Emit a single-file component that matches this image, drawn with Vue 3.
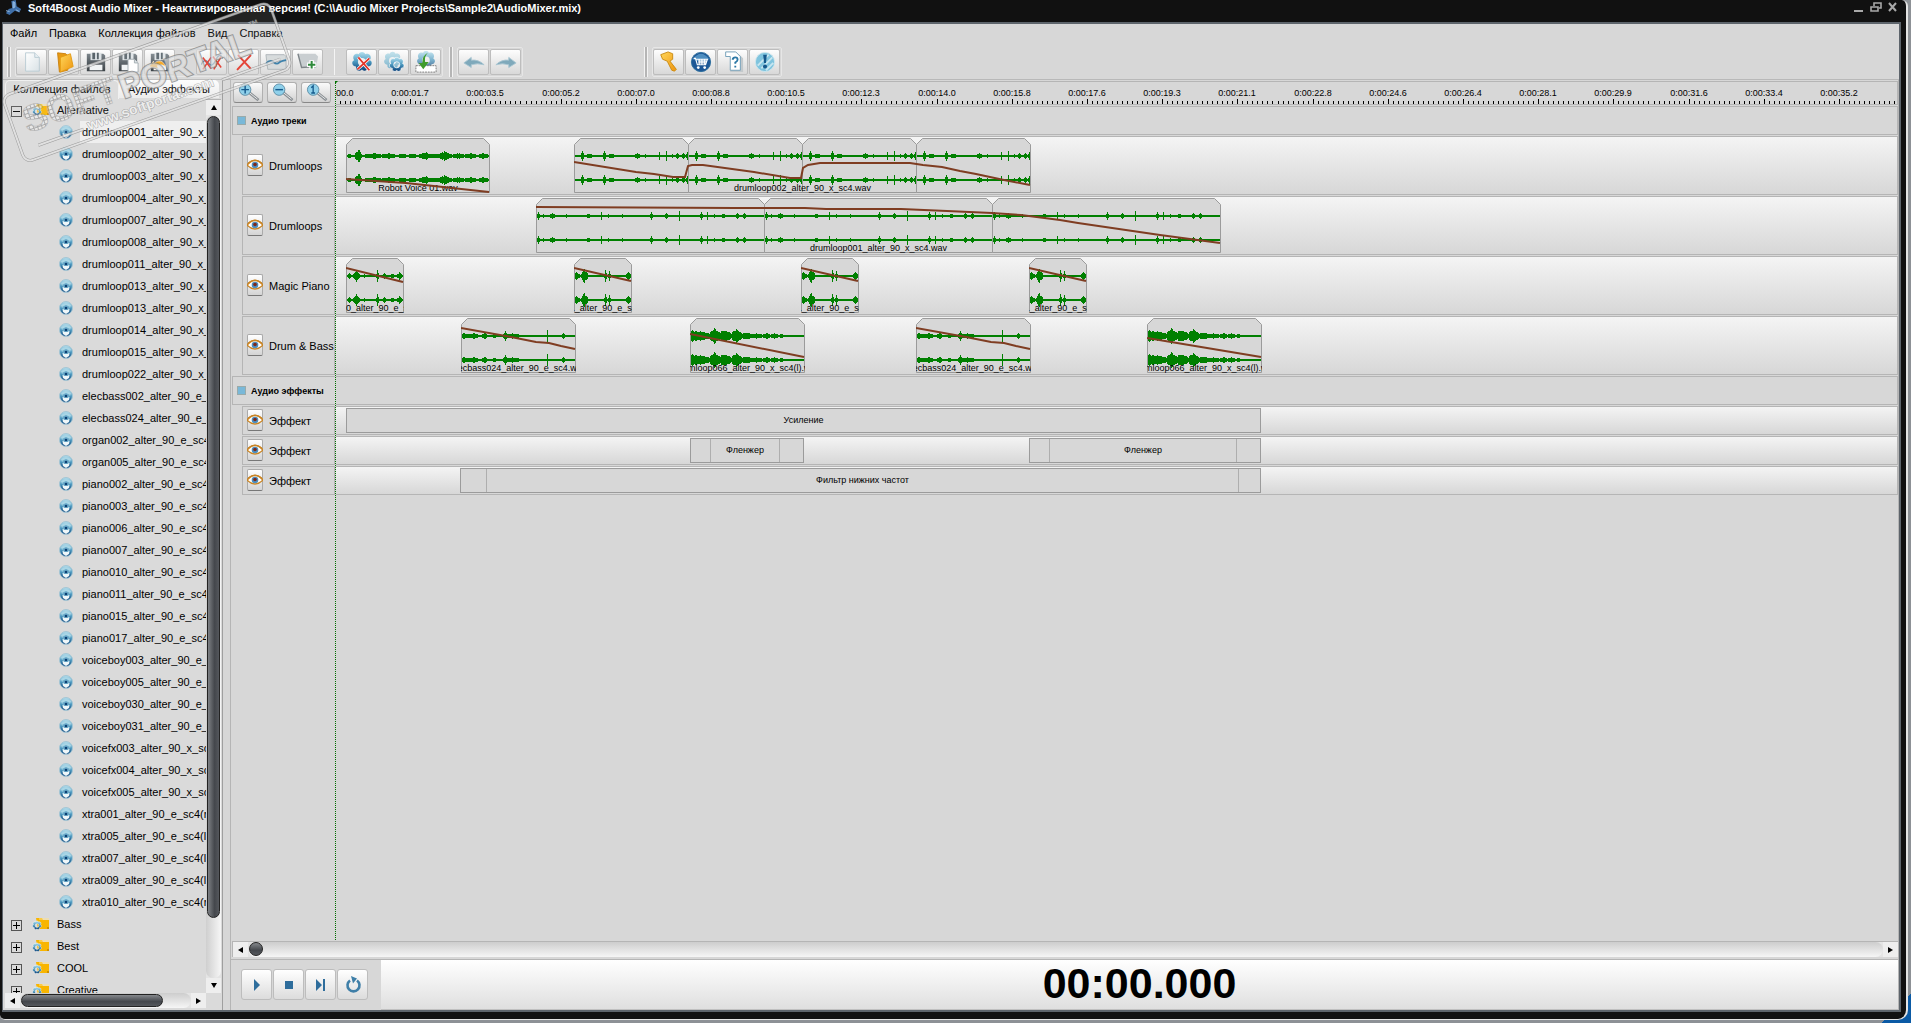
<script setup>
import { ref } from 'vue'

const menu = ['Файл', 'Правка', 'Коллекция файлов', 'Вид', 'Справка']

const toolGroups = [
  {
    id: 'project',
    parts: [
      ['new', 'open', 'save', 'save-as', 'import'],
      ['cut-all', 'delete', 'curve', 'add'],
      ['fx-remove', 'fx-copy', 'fx-apply'],
    ],
  },
  { id: 'history', parts: [['undo', 'redo']] },
  { id: 'help', parts: [['key', 'cart', 'question', 'about']] },
]

const activeTab = ref('files')
const samples = [
  'drumloop001_alter_90_x_sc4', 'drumloop002_alter_90_x_sc4', 'drumloop003_alter_90_x_sc4',
  'drumloop004_alter_90_x_sc4', 'drumloop007_alter_90_x_sc4', 'drumloop008_alter_90_x_sc4',
  'drumloop011_alter_90_x_sc4', 'drumloop013_alter_90_x_sc4', 'drumloop013_alter_90_x_sc4',
  'drumloop014_alter_90_x_sc4', 'drumloop015_alter_90_x_sc4', 'drumloop022_alter_90_x_sc4',
  'elecbass002_alter_90_e_sc4', 'elecbass024_alter_90_e_sc4', 'organ002_alter_90_e_sc4',
  'organ005_alter_90_e_sc4', 'piano002_alter_90_e_sc4', 'piano003_alter_90_e_sc4',
  'piano006_alter_90_e_sc4', 'piano007_alter_90_e_sc4', 'piano010_alter_90_e_sc4',
  'piano011_alter_90_e_sc4', 'piano015_alter_90_e_sc4', 'piano017_alter_90_e_sc4',
  'voiceboy003_alter_90_e_sc4', 'voiceboy005_alter_90_e_sc4', 'voiceboy030_alter_90_e_sc4',
  'voiceboy031_alter_90_e_sc4', 'voicefx003_alter_90_x_sc4', 'voicefx004_alter_90_x_sc4',
  'voicefx005_alter_90_x_sc4', 'xtra001_alter_90_e_sc4(r)', 'xtra005_alter_90_e_sc4(l)',
  'xtra007_alter_90_e_sc4(l)', 'xtra009_alter_90_e_sc4(l)', 'xtra010_alter_90_e_sc4(r)',
]
const selected = ref(0)
const closedFolders = ['Bass', 'Best', 'COOL', 'Creative']

const times = [
  '0:00:01.7', '0:00:03.5', '0:00:05.2', '0:00:07.0', '0:00:08.8', '0:00:10.5', '0:00:12.3',
  '0:00:14.0', '0:00:15.8', '0:00:17.6', '0:00:19.3', '0:00:21.1', '0:00:22.8', '0:00:24.6',
  '0:00:26.4', '0:00:28.1', '0:00:29.9', '0:00:31.6', '0:00:33.4', '0:00:35.2',
]
const majorStep = 75.2
const labels = times.map((text, i) => ({ text, x: Math.round((i + 1) * majorStep) }))
let tickPath = ''
for (let i = 1; i < 800; i++) {
  const x = Math.round((i * majorStep) / 15) + 0.5
  tickPath += `M${x} 24V${i % 15 ? 21 : 19}`
}

// Each peak is [position, half-height, half-width]; between peaks only the zero line is drawn.
const shapes = {
  loop2: [[8, 6, 1], [15, 3, 3], [30, 7, 1], [37, 3, 3], [63, 3, 3], [71, 2, 0], [85, 4, 0], [92, 5, 0], [98, 2, 1], [103, 3, 2], [109, 3, 2], [113, 4, 1]],
  loop1: [[2, 4, 1], [7, 2, 1], [16, 3, 3], [30, 3, 0], [52, 3, 2], [65, 4, 0], [72, 2, 1], [86, 3, 0], [115, 4, 1], [121, 1, 1], [130, 3, 2], [143, 5, 0], [165, 5, 1], [171, 4, 0], [178, 2, 1], [187, 3, 2], [201, 3, 1], [208, 3, 2]],
  piano: [[2, 4, 5], [10, 7, 4], [31, 6, 1], [35, 5, 1], [40, 1, 2], [54, 4, 3]],
  pianoSoft: [[3, 3, 2], [10, 6, 3], [18, 2, 2], [31, 6, 1], [38, 3, 2], [46, 2, 3], [53, 4, 3]],
  voice: [[3, 2, 3], [12, 7, 4], [20, 2, 6], [28, 3, 12], [42, 3, 12], [56, 2, 12], [66, 2, 12], [79, 4, 9], [88, 2, 8], [98, 5, 9], [112, 3, 9], [124, 3, 9], [137, 3, 7]],
  bass: [[3, 3, 8], [12, 3, 8], [23, 4, 3], [33, 2, 6], [44, 5, 2], [52, 3, 9], [86, 8, 0], [102, 3, 1]],
  heavy: [[2, 6, 20], [11, 5, 16], [24, 8, 7], [34, 6, 14], [46, 7, 8], [56, 4, 12], [67, 3, 8], [76, 3, 6], [84, 3, 5], [91, 2, 3]],
}

function wave(kind, width) {
  let d = ''
  for (const cy of [18, 42]) {
    for (let x = 1; x < width; x++) {
      let a = 1
      for (const [p, h, w] of shapes[kind]) {
        const k = 1 - Math.abs(x - p) / (w + 1)
        if (k > 0) a = Math.max(a, h * k)
      }
      if (a > 2) a *= 0.75 + 0.25 * Math.abs(Math.sin(x * 2.3))
      d += `M${x}.5 ${cy - Math.round(a)}V${cy + Math.round(a)}`
    }
  }
  return d
}

function outline(w) {
  return `M.5 54.5V6.5L6.5 .5H${w - 5.5}L${w + 0.5} 6.5V54.5Z`
}

function group(x, parts, width, kind, name, curve) {
  return { x, parts, width, kind, name, curve, total: parts * width }
}
const bassCurve = '0,10 50,19 75,24 88,25 100,28 114,31'
const pianoCurve = '0,10 57,23'
const tracks = [
  {
    name: 'Drumloops',
    clips: [
      group(11, 1, 143, 'voice', 'Robot Voice 01.wav', '0,41 60,45 143,54'),
      group(239, 4, 114, 'loop2', 'drumloop002_alter_90_x_sc4.wav',
        '0,24 62,34 80,36 99,39 111,39 114,28 118,27 129,27 180,34 216,40 227,40 229,30 234,27 246,25 336,25 349,27 368,29 386,33 402,36 430,42 456,47'),
    ],
  },
  {
    name: 'Drumloops',
    clips: [
      group(201, 3, 228, 'loop1', 'drumloop001_alter_90_x_sc4.wav',
        '0,9 200,10 269,10 290,11 365,11 411,13 456,15 485,17 524,22 542,25 624,37 684,45'),
    ],
  },
  {
    name: 'Magic Piano',
    clips: [
      group(11, 1, 57, 'pianoSoft', 'piano010_alter_90_e_sc4.wav', '0,10 57,24'),
      group(239, 1, 57, 'piano', 'piano011_alter_90_e_sc4(l).wav', pianoCurve),
      group(466, 1, 57, 'piano', 'piano011_alter_90_e_sc4(l).wav', pianoCurve),
      group(694, 1, 57, 'piano', 'piano011_alter_90_e_sc4(l).wav', pianoCurve),
    ],
  },
  {
    name: 'Drum & Bass',
    clips: [
      group(126, 1, 114, 'bass', 'elecbass024_alter_90_e_sc4.wav', bassCurve),
      group(355, 1, 114, 'heavy', 'drumloop066_alter_90_x_sc4(l).wav', '0,16 114,39'),
      group(581, 1, 114, 'bass', 'elecbass024_alter_90_e_sc4.wav', bassCurve),
      group(812, 1, 114, 'heavy', 'drumloop066_alter_90_x_sc4(l).wav', '0,20 114,39'),
    ],
  },
]

const effects = [
  [{ name: 'Усиление', x: 11, w: 915, fadeIn: 0, fadeOut: 0 }],
  [
    { name: 'Фленжер', x: 355, w: 114, fadeIn: 20, fadeOut: 24 },
    { name: 'Фленжер', x: 694, w: 232, fadeIn: 20, fadeOut: 24 },
  ],
  [{ name: 'Фильтр нижних частот', x: 125, w: 801, fadeIn: 26, fadeOut: 22 }],
]

const transport = ['play', 'stop', 'step', 'loop']
</script>

<template>
  <div class="desktop">
    <svg class="defs" width="0" height="0" aria-hidden="true">
      <defs>
        <linearGradient id="gBlue" x1="0" y1="0" x2="0" y2="1">
          <stop offset="0" stop-color="#b4e0ee" /><stop offset=".5" stop-color="#4f9cc2" /><stop offset="1" stop-color="#083f78" />
        </linearGradient>
        <linearGradient id="gPale" x1="0" y1="0" x2="0" y2="1">
          <stop offset="0" stop-color="#c4e3ec" /><stop offset="1" stop-color="#7fb4cc" />
        </linearGradient>
        <linearGradient id="gGold" x1="0" y1="0" x2="1" y2="1">
          <stop offset="0" stop-color="#ffd75a" /><stop offset="1" stop-color="#ee9410" />
        </linearGradient>
        <linearGradient id="gPaper" x1="0" y1="0" x2="1" y2="1">
          <stop offset="0" stop-color="#fff" /><stop offset="1" stop-color="#d9e2e6" />
        </linearGradient>
        <linearGradient id="gDisk" x1="0" y1="0" x2="0" y2="1">
          <stop offset="0" stop-color="#7d868c" /><stop offset="1" stop-color="#2c3338" />
        </linearGradient>
        <pattern id="dots" width="4" height="4" patternUnits="userSpaceOnUse">
          <rect width="4" height="4" fill="#8f8f8f" /><rect x="1" y="1" width="3" height="3" fill="#f2f2f2" />
        </pattern>
      </defs>
      <symbol id="flower" viewBox="0 0 24 24">
        <path d="M12 1c2 0 3 1 3.500 2.500C17 2.500 20 3 21 5s.5 4-.5 5c1.500.5 2.500 2 2 4s-2 3-4 3c0 2-1 4-3 4.500s-3-.5-3.500-1.500c-.5 1-2 2-4 1.500S5 19 5.500 17c-2 0-3.500-1-4-3s.5-3.500 2-4c-1-1-1.500-3-.5-5s4-2.500 5.500-1.500C9 2 10 1 12 1zM12 7.500a4.500 4.500 0 1 0 0 9 4.500 4.500 0 0 0 0-9z" fill-rule="evenodd" />
      </symbol>
      <symbol id="disk" viewBox="0 0 24 24">
        <path d="M2 3h18l2 2v17H2z" fill="url(#gDisk)" />
        <path d="M6 2h12v8H6z" fill="#dfe4e7" /><path d="M8 2h3v7H8zM13 2h2v7h-2z" fill="#59646b" />
        <path d="M5 15h14v6H5z" fill="#f1f4f5" />
      </symbol>
      <symbol id="i-new" viewBox="0 0 24 24">
        <path d="M5 2h10l5 5v15H5z" fill="url(#gPaper)" stroke="#b9cbd2" /><path d="M15 2v5h5" fill="#e8eff2" stroke="#b9cbd2" />
      </symbol>
      <symbol id="i-open" viewBox="0 0 24 24">
        <path d="M5 2l9 1 2 2 3 1-3 15-9 2z" fill="#e79a12" stroke="#c98010" />
        <path d="M8 7l11-4 3 14-14 6z" fill="url(#gGold)" stroke="#e39a14" />
      </symbol>
      <symbol id="i-save" viewBox="0 0 24 24"><use href="#disk" /></symbol>
      <symbol id="i-save-as" viewBox="0 0 24 24">
        <use href="#disk" /><path d="M12 9h7l4 4v10H12z" fill="#fff" stroke="#9aa5ab" /><path d="M19 9v4h4" fill="#dde4e8" stroke="#9aa5ab" />
      </symbol>
      <symbol id="i-import" viewBox="0 0 24 24">
        <use href="#disk" /><path d="M0 17l5-6v3c5-5 11-4 13 3-3-2-6-3-9-1l1 3z" fill="#f5a31b" stroke="#fff" stroke-width=".6" />
      </symbol>
      <symbol id="i-cut-all" viewBox="0 0 24 24">
        <path d="M0 15q4-8 8-2t8-3 8-2" fill="none" stroke="#4a7fa0" stroke-width="1.500" />
        <path d="M2 7l9 12M11 7L2 20M13 6l9 12M22 6l-8 14" stroke="#e2362a" stroke-width="1.700" />
      </symbol>
      <symbol id="i-delete" viewBox="0 0 24 24">
        <path d="M6 5l13 14M19 5L5 20" stroke="#e2362a" stroke-width="2.200" stroke-linecap="round" />
      </symbol>
      <symbol id="i-curve" viewBox="0 0 24 24">
        <path d="M1 4h20l2 2v14H3z" fill="#d4d8da" stroke="#a9b0b4" /><path d="M1 14q4-5 8-2t6 1 8-3" fill="none" stroke="#2e78a5" stroke-width="2" />
      </symbol>
      <symbol id="i-add" viewBox="0 0 24 24">
        <path d="M1 3h19l3 3-2 11-16 1z" fill="#c9ced1" /><path d="M1 3l4 15 16-1" fill="none" stroke="#7d8488" stroke-width="1.500" />
        <path d="M16 10v10M11 15h10" stroke="#fff" stroke-width="5" /><path d="M16 11v8M12 15h8" stroke="#2f8a3c" stroke-width="2.200" />
      </symbol>
      <symbol id="i-fx-remove" viewBox="0 0 24 24">
        <use href="#flower" fill="url(#gBlue)" /><path d="M8 7l12 14M20 8L7 20" stroke="#fff" stroke-width="3.500" /><path d="M8 7l12 14M20 8L7 20" stroke="#e2362a" stroke-width="2" />
      </symbol>
      <symbol id="i-fx-copy" viewBox="0 0 24 24">
        <use href="#flower" width="21" height="21" fill="url(#gPale)" /><use href="#flower" x="6" y="6" width="18" height="18" fill="url(#gBlue)" stroke="#fff" />
      </symbol>
      <symbol id="i-fx-apply" viewBox="0 0 24 24">
        <use href="#flower" x="1" y="-1" width="22" height="22" fill="url(#gBlue)" opacity=".7" /><path d="M1 16h22v7H1z" fill="#fff" stroke="#777" stroke-dasharray="2 1" />
        <path d="M14 2Q8 5 8 13H4l5 7 6-8h-4q-1-6 3-10z" fill="#3f9c2c" />
      </symbol>
      <symbol id="i-undo" viewBox="0 0 24 24"><path d="M1 13l8-6v3q8-1 14 5-7-2-14 0v3z" fill="#7fa9bb" stroke="#a9c5d1" /></symbol>
      <symbol id="i-redo" viewBox="0 0 24 24"><path d="M23 13l-8-6v3q-8-1-14 5 7-2 14 0v3z" fill="#7fa9bb" stroke="#a9c5d1" /></symbol>
      <symbol id="i-key" viewBox="0 0 24 24">
        <path d="M3 4l8-3 5 2v6l-3 2 7 9-2 2-3-1-5-10-5-2z" fill="url(#gGold)" stroke="#c98a10" />
      </symbol>
      <symbol id="i-cart" viewBox="0 0 24 24">
        <circle cx="12" cy="12" r="10.500" fill="#1c5796" stroke="#2e6f9e" /><path d="M3 9q9-12 18 0-9 5-18 0z" fill="#6fb2dc" opacity=".6" />
        <path d="M4 8h2l2 7h9l2-6H7M9 11h9M9 13h8M10 9v6M13 9v6M16 9v6" fill="none" stroke="#fff" stroke-width="1.200" /><circle cx="9" cy="18" r="1.500" fill="#fff" /><circle cx="16" cy="18" r="1.500" fill="#fff" />
      </symbol>
      <symbol id="i-question" viewBox="0 0 24 24">
        <path d="M9 4h10l4 4v15H9z" fill="#c3c9cc" /><path d="M4 1h11l5 5v15H9V6H4z" fill="#fff" stroke="#6d9db6" />
        <path d="M11.500 9.500q.5-2.500 3-2.500t2.500 2.500q0 1.500-2.500 3v1.500M14.500 16v2" fill="none" stroke="#2a77a5" stroke-width="2" />
      </symbol>
      <symbol id="i-about" viewBox="0 0 24 24">
        <circle cx="12" cy="12" r="10.500" fill="#7fc4de" stroke="#cfe6ee" /><path d="M4 16L16 4M8 19L20 7M13 21l8-8" stroke="#c7e6f0" stroke-width="2" />
        <path d="M10 4h4l-1 9h-2z" fill="#15598c" /><circle cx="12" cy="17" r="2.200" fill="#15598c" />
      </symbol>
      <symbol id="lens" viewBox="0 0 28 20">
        <path d="M14 9l11 9" stroke="#8a8f93" stroke-width="3" /><path d="M14 9l10 8" stroke="#e8eaeb" />
        <circle cx="11" cy="7" r="6" fill="#8fd0ea" stroke="#5f8ea6" />
      </symbol>
      <symbol id="i-zoom-in" viewBox="0 0 28 20"><use href="#lens" /><path d="M11 3v8M7 7h8" stroke="#15598c" stroke-width="1.500" /></symbol>
      <symbol id="i-zoom-out" viewBox="0 0 28 20"><use href="#lens" /><path d="M7 7h8" stroke="#15598c" stroke-width="1.500" /></symbol>
      <symbol id="i-zoom-one" viewBox="0 0 28 20"><use href="#lens" /><path d="M9 5l2-2v7M9 10.500h4" fill="none" stroke="#15598c" stroke-width="1.400" /></symbol>
      <symbol id="i-sample" viewBox="0 0 14 14">
        <circle cx="7" cy="7" r="6.500" fill="url(#gBlue)" stroke="#a5c6d4" /><path d="M2 4q5-4 10 0l-1 3H3z" fill="#a9d6e6" />
        <path d="M3.500 8l3.500-2 3.500 2-.5 3-3 2-3-2z" fill="#eef6f9" /><path d="M3 6l4-2 4 2-2 3H5z" fill="#69a9c8" /><circle cx="7" cy="7" r="1.300" fill="#0b3f74" />
      </symbol>
      <symbol id="i-folder" viewBox="0 0 18 14">
        <path d="M4 1h6l1 2h6v9H6z" fill="#f8b500" /><path d="M7 2h10" stroke="#ffe08a" /><path d="M15 11h2" stroke="#a56a00" />
        <use href="#flower" x="0" y="3" width="10" height="11" fill="url(#gBlue)" stroke="#fff" />
      </symbol>
      <symbol id="i-eye" viewBox="0 0 16 12">
        <path d="M0 6q8-9 16 0q-8 8-16 0z" fill="#fff" stroke="#c98526" stroke-width="1.600" /><circle cx="8" cy="6" r="3.300" fill="#4b8fc0" /><circle cx="8" cy="5.500" r="1.800" fill="#7c2a1c" />
        <path d="M1 4q7-6 14 0" fill="none" stroke="#c98526" />
      </symbol>
      <symbol id="i-play" viewBox="0 0 24 24"><path d="M9 6v12l6-6z" fill="#2e6d9c" /></symbol>
      <symbol id="i-stop" viewBox="0 0 24 24"><path d="M8 8h8v8H8z" fill="#2e6d9c" /></symbol>
      <symbol id="i-step" viewBox="0 0 24 24"><path d="M7 6v12l6-6zM14 6h2v12h-2z" fill="#2e6d9c" /></symbol>
      <symbol id="i-loop" viewBox="0 0 24 24"><path d="M16 7.500a6 6 0 1 1-7 0" fill="none" stroke="#3f7fa8" stroke-width="2.600" /><path d="M10 3l6 2.500-4 5z" fill="#3f7fa8" /></symbol>
    </svg>

    <div class="shell">
      <header class="title-bar">
        <svg class="logo" viewBox="0 0 20 18" aria-hidden="true">
          <path d="M7 1l5-1 1 7 5 3-2 4-5-2-6 5-4-2 3-5 4-1z" fill="#3f6fa8" /><path d="M9 2l2 1v5l-2 1zM1 12l4 1M12 11l4 2" stroke="#9cc0e4" fill="#6d9fd4" />
        </svg>
        <h1>Soft4Boost Audio Mixer - Неактивированная версия! (C:\\Audio Mixer Projects\Sample2\AudioMixer.mix)</h1>
        <div class="win-buttons">
          <button type="button" aria-label="Свернуть"><svg viewBox="0 0 12 12"><path d="M1 10h9" stroke="#a9a9a9" stroke-width="2" /></svg></button>
          <button type="button" aria-label="Восстановить"><svg viewBox="0 0 12 12"><path d="M4 5V2h7v5H9M1 6h7v4H1z" fill="none" stroke="#a9a9a9" stroke-width="1.600" /></svg></button>
          <button type="button" aria-label="Закрыть"><svg viewBox="0 0 12 12"><path d="M2 2l7 8M9 2l-7 8" stroke="#a9a9a9" stroke-width="2" /></svg></button>
        </div>
      </header>

      <div class="window">
        <nav class="menu">
          <button v-for="item in menu" :key="item" type="button">{{ item }}</button>
        </nav>

        <div class="toolbar">
          <div v-for="g in toolGroups" :key="g.id" class="tool-block" :class="'block-' + g.id">
            <span class="grip"></span>
            <div class="tool-group">
              <div v-for="(part, i) in g.parts" :key="i" class="tool-part">
                <button v-for="name in part" :key="name" type="button" class="tool" :aria-label="name">
                  <svg><use :href="'#i-' + name" /></svg>
                </button>
              </div>
            </div>
          </div>
        </div>

        <div class="main">
          <aside class="side">
            <div class="tabs" role="tablist">
              <button type="button" role="tab" class="tab" :class="{ on: activeTab === 'files' }" @click="activeTab = 'files'">Коллекция файлов</button>
              <button type="button" role="tab" class="tab" :class="{ on: activeTab === 'fx' }" @click="activeTab = 'fx'">Аудио эффекты</button>
            </div>
            <div class="tree-wrap">
              <ul class="tree">
                <li class="folder"><i class="box"></i><svg class="f-icon"><use href="#i-folder" /></svg><span>Alternative</span></li>
                <li v-for="(s, i) in samples" :key="i" class="sample" :class="{ sel: selected === i }" @click="selected = i">
                  <svg class="s-icon"><use href="#i-sample" /></svg><span>{{ s }}</span>
                </li>
                <li v-for="f in closedFolders" :key="f" class="folder">
                  <i class="box plus"></i><svg class="f-icon"><use href="#i-folder" /></svg><span>{{ f }}</span>
                </li>
              </ul>
              <div class="v-scroll">
                <button type="button" class="arrow up" aria-label="Вверх"></button>
                <div class="v-track"><div class="v-thumb"></div></div>
                <button type="button" class="arrow down" aria-label="Вниз"></button>
              </div>
            </div>
            <div class="h-scroll side-h">
              <button type="button" class="arrow left" aria-label="Влево"></button>
              <div class="h-track"><div class="h-thumb"></div></div>
              <button type="button" class="arrow right" aria-label="Вправо"></button>
            </div>
          </aside>

          <section class="work">
            <div class="timeline">
              <div class="ruler-row">
                <div class="zoom-tools">
                  <button v-for="z in ['zoom-in', 'zoom-out', 'zoom-one']" :key="z" type="button" :aria-label="z"><svg><use :href="'#i-' + z" /></svg></button>
                </div>
                <div class="ruler">
                  <svg class="ticks"><path :d="tickPath" stroke="#000" shape-rendering="crispEdges" /></svg>
                  <span class="time first">00.0</span>
                  <span v-for="l in labels" :key="l.text" class="time" :style="{ left: l.x + 'px' }">{{ l.text }}</span>
                </div>
              </div>

              <h2 class="section"><i></i>Аудио треки</h2>
              <div v-for="(t, i) in tracks" :key="i" class="row track">
                <div class="head"><button type="button" class="eye" aria-label="Видимость"><svg><use href="#i-eye" /></svg></button>{{ t.name }}</div>
                <div class="lane">
                  <div v-for="c in t.clips" :key="c.x" class="clip" :style="{ left: c.x + 'px', width: c.total + 1 + 'px' }">
                    <svg class="clip-art">
                      <g v-for="n in c.parts" :key="n" :transform="`translate(${(n - 1) * c.width} 0)`">
                        <path :d="outline(c.width)" fill="#d7d7d7" stroke="#9b9b9b" />
                        <path :d="wave(c.kind, c.width)" stroke="#008000" shape-rendering="crispEdges" />
                      </g>
                    </svg>
                    <span>{{ c.name }}</span>
                    <svg class="clip-art"><polyline :points="c.curve" fill="none" stroke="#7f3d22" stroke-width="2" /></svg>
                  </div>
                </div>
              </div>

              <h2 class="section"><i></i>Аудио эффекты</h2>
              <div v-for="(row, i) in effects" :key="'e' + i" class="row effect">
                <div class="head"><button type="button" class="eye" aria-label="Видимость"><svg><use href="#i-eye" /></svg></button>Эффект</div>
                <div class="lane">
                  <div v-for="e in row" :key="e.x" class="bar" :style="{ left: e.x + 'px', width: e.w + 'px' }">
                    <i v-if="e.fadeIn" class="fade in" :style="{ width: e.fadeIn + 'px' }"></i>
                    <span>{{ e.name }}</span>
                    <i v-if="e.fadeOut" class="fade out" :style="{ width: e.fadeOut + 'px' }"></i>
                  </div>
                </div>
              </div>
              <div class="playhead"></div>
            </div>

            <div class="h-scroll work-h">
              <button type="button" class="arrow left" aria-label="Влево"></button>
              <div class="h-track"><div class="h-thumb"></div></div>
              <button type="button" class="arrow right" aria-label="Вправо"></button>
            </div>

            <footer class="transport">
              <div class="players">
                <button v-for="p in transport" :key="p" type="button" :aria-label="p"><svg><use :href="'#i-' + p" /></svg></button>
              </div>
              <output class="clock">00:00.000</output>
            </footer>
          </section>
        </div>
      </div>
    </div>

    <svg class="stamp" viewBox="0 0 300 170" aria-hidden="true">
      <g transform="translate(1 97) rotate(-19.600)" font-family="Liberation Sans, Arial, sans-serif" font-weight="700">
        <rect x="1" y="0" width="283" height="70" rx="8" fill="#fff" fill-opacity=".1" stroke="#858585" stroke-width="3" />
        <rect x="1" y="0" width="283" height="70" rx="8" fill="none" stroke="#e2e2e2" stroke-width="2" />
        <path d="M19 58H67M214 58H276" stroke="#858585" stroke-width="3" />
        <path d="M19 58H67M214 58H276" stroke="#e2e2e2" stroke-width="2" />
        <text x="13" y="43" font-size="37" fill="url(#dots)" fill-opacity=".85" stroke="#8f8f8f" stroke-opacity=".5">SOFT</text>
        <g fill="#e2e2e2" fill-opacity=".85" stroke="#858585" stroke-width="2" paint-order="stroke">
          <text x="115" y="43" font-size="34">PORTAL</text>
        </g>
        <text x="72" y="61" font-size="14" fill="#f2f2f2" stroke="#858585" stroke-width="1" stroke-opacity=".9" paint-order="stroke">www.softportal.com</text>
        <text x="257" y="20" font-size="11" fill="#c4c4c4">™</text>
      </g>
    </svg>
  </div>
</template>

<style>
body { margin: 0; background: #8d9196; }
</style>

<style scoped>
* { box-sizing: border-box; }
.desktop {
  position: relative; height: 100vh; min-height: 600px; padding: 0 3px 3px 0; overflow: hidden;
  background: linear-gradient(135deg, #8d9196 99%, #0b5aa5 99%);
  font: 11px/14px "Liberation Sans", Arial, sans-serif; color: #000;
}
.defs { position: absolute; }
button { font: inherit; color: inherit; padding: 0; margin: 0; border: 0; background: none; }
.shell {
  height: 100%; display: flex; flex-direction: column; background: #111;
  padding: 0 5px 7px 2px; border: solid #e4e4e4; border-width: 0 2px 1px 0; border-radius: 0 6px 10px 5px;
}
.title-bar { height: 22px; flex: none; display: flex; align-items: flex-start; }
.logo { width: 20px; height: 16px; margin-left: 2px; }
h1 { flex: 1; margin: 1px 0 0 4px; font-size: 11px; line-height: 14px; color: #fff; white-space: nowrap; }
.win-buttons { display: flex; gap: 5px; padding: 1px 2px 0 0; }
.win-buttons button, .win-buttons svg { display: block; width: 12px; height: 12px; }
.window {
  flex: 1; min-height: 0; display: flex; flex-direction: column; background: #d7d7d7;
  border: 2px solid #5d646b; border-left-width: 1px;
}
.menu { height: 23px; flex: none; display: flex; align-items: center; gap: 12px; padding: 0 7px 5px; }
.toolbar { height: 33px; flex: none; display: flex; padding-left: 4px; border-bottom: 1px solid #b8b8b8; }
.tool-block { display: flex; flex: none; margin-right: 5px; }
.block-history { margin-left: 1px; }
.block-help { margin-left: 116px; }
.grip { width: 4px; height: 30px; margin-right: 4px; border: solid #f2f2f2; border-width: 0 1px; background: #b5b5b5; }
.tool-group { display: flex; height: 30px; padding: 1px 0; border: 1px solid #e6e6e6; border-radius: 2px; }
.tool-part { display: flex; }
.tool-part + .tool-part { margin-left: 20px; }
.tool-part:nth-child(3) { margin-left: 10px; padding-left: 11px; border-left: 1px solid #f4f4f4; }
.tool {
  width: 31px; height: 26px; margin-right: 1px; border: 1px solid #bdbdbd; border-radius: 2px;
  background: linear-gradient(#fdfdfd, #d8d8d8); display: grid; place-items: center;
}
.tool svg { width: 22px; height: 22px; }

.main { flex: 1; min-height: 0; display: flex; }
.side { width: 220px; flex: none; display: flex; flex-direction: column; border-right: 1px solid #9f9f9f; padding: 0 1px 2px 2px; background: #dadada; }
.tabs { display: flex; height: 19px; flex: none; padding-right: 2px; }
.tab { height: 18px; flex: 1 1 99px; border-radius: 5px 5px 0 0; background: linear-gradient(#fdfdfd, #ececec); white-space: nowrap; }
.tab.on { flex-basis: 113px; height: 19px; padding-bottom: 3px; background: #dadada; border: 1px solid #f0f0f0; border-bottom: 0; }
.tree-wrap { flex: 1; min-height: 0; display: flex; }
.tree { flex: 1; min-width: 0; margin: 0; padding: 0; list-style: none; overflow: hidden; background: #dadada; }
.tree li { display: flex; align-items: center; height: 22px; white-space: nowrap; }
.folder { padding-left: 6px; }
.box { width: 11px; height: 11px; margin-top: 2px; border: 1px solid #555; background: linear-gradient(#000, #000) center / 7px 1px no-repeat; }
.box.plus { background: linear-gradient(#000, #000) center / 7px 1px no-repeat, linear-gradient(#000, #000) center / 1px 7px no-repeat; }
.f-icon { width: 18px; height: 14px; margin: 0 7px 0 10px; flex: none; }
.sample { padding-left: 54px; }
.s-icon { width: 14px; height: 14px; margin-right: 7px; flex: none; }
.sample span { flex: 1; line-height: 22px; padding-left: 2px; }
.sample.sel span { background: #efefef; }

.v-scroll { width: 15px; flex: none; display: flex; flex-direction: column; border-top: 1px solid #b5b5b5; background: #e4e4e4; }
.v-track { flex: 1; min-height: 0; padding: 1px 1px 0; background: linear-gradient(90deg, #cfcfcf, #f6f6f6); border-radius: 7px; }
.v-thumb { height: 93%; width: 13px; border: 1px solid #222; border-radius: 7px; background: linear-gradient(90deg, #7d8084, #44474c 60%, #55585d); }
.arrow { width: 15px; height: 15px; flex: none; display: grid; place-items: center; background: #eee; }
.arrow::after { content: ""; border: 3px solid transparent; }
.up::after { border-width: 0 3px 5px; border-bottom-color: #000; }
.down::after { border-width: 5px 3px 0; border-top-color: #000; }
.left::after { border-width: 3px 5px 3px 0; border-right-color: #000; }
.right::after { border-width: 3px 0 3px 5px; border-left-color: #000; }
.h-scroll { display: flex; height: 15px; flex: none; background: #e4e4e4; }
.h-track { flex: 1; padding: 1px; border-radius: 8px; background: linear-gradient(#cdcdcd, #f6f6f6); }
.h-thumb { height: 13px; border: 1px solid #222; border-radius: 7px; background: linear-gradient(#85888c, #44474c 60%, #55585d); }
.side-h { margin-right: 15px; }
.side-h .h-thumb { width: 84%; }

.work { flex: 1; min-width: 0; margin-left: 7px; display: flex; flex-direction: column; border: solid #b5b5b5; border-width: 0 1px 0 1px; }
.timeline { position: relative; flex: 1; min-height: 0; padding: 1px 0 0 1px; overflow: hidden; }
.ruler-row { display: flex; height: 24px; margin-bottom: 1px; }
.zoom-tools { width: 103px; flex: none; display: flex; gap: 4px; padding: 1px 1px 0; }
.zoom-tools button { width: 30px; height: 21px; border: 1px solid #b0b0b0; border-bottom-color: #888; border-radius: 3px; background: linear-gradient(#fafafa, #d2d2d2); }
.zoom-tools svg { display: block; width: 28px; height: 19px; }
.ruler { position: relative; flex: 1; min-width: 0; border: 1px solid #b5b5b5; border-left: 0; overflow: hidden; }
.ticks { position: absolute; left: 0; top: -2px; width: 100%; height: 24px; }
.time { position: absolute; top: 5px; width: 60px; margin-left: -30px; text-align: center; font: 9px/12px "Liberation Sans", sans-serif; }
.time.first { left: 1px; width: auto; margin: 0; }
.section {
  display: flex; align-items: center; height: 29px; margin: 0 0 1px; padding-left: 4px; border: 1px solid #b5b5b5;
  font: bold 9px/12px "Liberation Sans", sans-serif;
}
.section i { width: 9px; height: 9px; margin-right: 5px; border: 1px solid #9aa; background: #79b8d8; }
.row { display: flex; margin: 0 0 1px 10px; }
.track { height: 59px; }
.effect { height: 29px; }
.head {
  width: 93px; flex: none; display: flex; align-items: center; gap: 6px; padding-left: 4px; border: 1px solid #b5b5b5;
  font: 11px/16px "Liberation Sans", sans-serif; white-space: nowrap;
}
.eye { width: 16px; height: 22px; flex: none; margin-top: -2px; border: 1px solid #aaa; border-bottom-color: #777; border-radius: 2px; background: linear-gradient(#fff, #d4d4d4); display: grid; place-items: center; }
.eye svg { width: 16px; height: 12px; margin: 0 -1px; }
.lane { position: relative; flex: 1; min-width: 0; border: 1px solid #b5b5b5; border-left: 0; overflow: hidden; background: linear-gradient(#f4f4f4, #d7d7d7); }
.clip { position: absolute; top: 1px; height: 55px; overflow: hidden; display: flex; justify-content: center; align-items: flex-end; font: 9px/10px "Liberation Sans", sans-serif; }
.clip span { position: relative; white-space: nowrap; }
.clip-art { position: absolute; left: 0; top: 0; width: 100%; height: 100%; }
.bar { position: absolute; top: 1px; height: 25px; display: flex; align-items: center; border: 1px solid #9b9b9b; background: #d7d7d7; font: 9px/10px "Liberation Sans", sans-serif; }
.bar span { flex: 1; padding-bottom: 2px; text-align: center; white-space: nowrap; }
.fade { height: 100%; border: 0 solid #aeaeae; }
.fade.in { border-right-width: 1px; }
.fade.out { border-left-width: 1px; }
.playhead { position: absolute; left: 104px; top: 1px; bottom: 0; width: 1px; background: repeating-linear-gradient(#007000 0 1px, #d7d7d7 1px 2px); }
.playhead::before { content: ""; position: absolute; left: 0; top: 0; border: solid transparent; border-width: 0 3px 3px 0; border-top: 3px solid #007000; }

.work-h { height: 16px; margin: 0 0 2px 1px; border: solid #b5b5b5; border-width: 1px 0 0 1px; }
.work-h .h-thumb { width: 14px; height: 14px; }
.work-h .h-track { padding: 0 1px; }
.transport { display: flex; height: 51px; flex: none; border-top: 1px solid #b5b5b5; }
.players { display: flex; gap: 1px; padding: 9px 10px 0 10px; width: 150px; flex: none; }
.players button { width: 31px; height: 31px; border: 1px solid #bdbdbd; border-radius: 3px; background: linear-gradient(#fff, #dcdcdc); display: grid; place-items: center; }
.players svg { width: 24px; height: 24px; }
.clock { flex: 1; display: flex; justify-content: center; align-items: flex-start; border-bottom: 1px solid #c0c0c0; background: linear-gradient(#fff, #dfdfdf); font: bold 43px/46px "Liberation Sans", sans-serif; }
.stamp { position: absolute; left: 0; top: 0; width: 300px; height: 170px; opacity: .75; pointer-events: none; }
</style>
